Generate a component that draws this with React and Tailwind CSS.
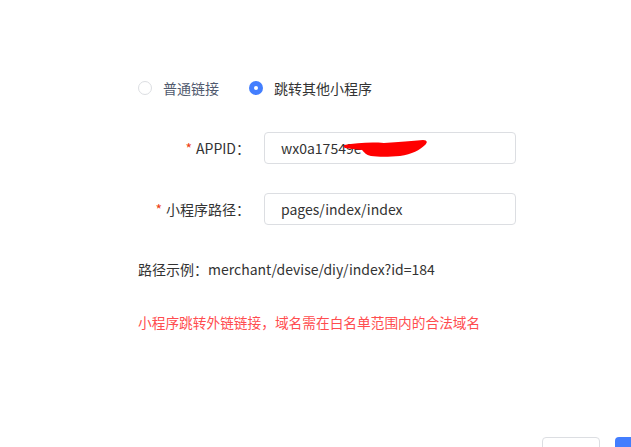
export default function App() {
  const font = { fontFamily: '"Noto Sans CJK SC", "Microsoft YaHei", sans-serif' };
  return (
    <div className="w-[631px] h-[447px] bg-white overflow-hidden relative text-[14px] text-[#333]" style={font}>
      <div className="pl-[138px] pt-[79px]">
        <div className="flex items-center h-[18px]">
          <label className="flex items-center">
            <span className="w-[14px] h-[14px] rounded-full border border-[#dcdee2] bg-white" />
            <span className="ml-[11px] text-[#515a6e]">普通链接</span>
          </label>
          <label className="flex items-center ml-[30px]">
            <span className="w-[14px] h-[14px] rounded-full bg-[#437efe] flex items-center justify-center">
              <span className="w-[4px] h-[4px] rounded-full bg-white" />
            </span>
            <span className="ml-[11px] text-[#333]">跳转其他小程序</span>
          </label>
        </div>

        <div className="flex items-center mt-[35px]">
          <div className="w-[126px] pr-[14px] text-right">
            <span className="text-[#ed4014] mr-[4px]">*</span>APPID：
          </div>
          <div className="relative w-[252px] h-[32px] border border-[#dcdee2] rounded-[4px] flex items-center pl-[16px]">
            <span>wx0a17549e</span>
            <svg className="absolute left-[79px] top-[7px]" width="84" height="20" viewBox="0 0 84 20">
              <path d="M0 5 C12 3, 26 2, 40 3 C55 2, 68 1, 79 0 C83 0, 84 2, 81 5 C76 10, 68 14, 56 16 C45 17, 34 17, 27 16 C22 15, 20 12, 18 10 C12 9, 6 9, 1 8 C-1 7, -1 6, 0 5 Z" fill="#ff0000" />
            </svg>
          </div>
        </div>

        <div className="flex items-center mt-[29px]">
          <div className="w-[126px] pr-[14px] text-right">
            <span className="text-[#ed4014] mr-[4px]">*</span>小程序路径：
          </div>
          <div className="w-[252px] h-[32px] border border-[#dcdee2] rounded-[4px] flex items-center pl-[16px]">
            pages/index/index
          </div>
        </div>

        <div className="mt-[34px] leading-[20px]">路径示例：merchant/devise/diy/index?id=184</div>
        <div className="mt-[33px] leading-[20px] text-[13.7px] text-[#ff4d4f]">小程序跳转外链链接，域名需在白名单范围内的合法域名</div>
      </div>

      <div className="absolute left-[542px] top-[437px] w-[58px] h-[32px] border border-[#dcdee2] rounded-[4px] bg-white" />
      <div className="absolute left-[615px] top-[437px] w-[60px] h-[32px] rounded-[4px] bg-[#437efe]" />
    </div>
  );
}
